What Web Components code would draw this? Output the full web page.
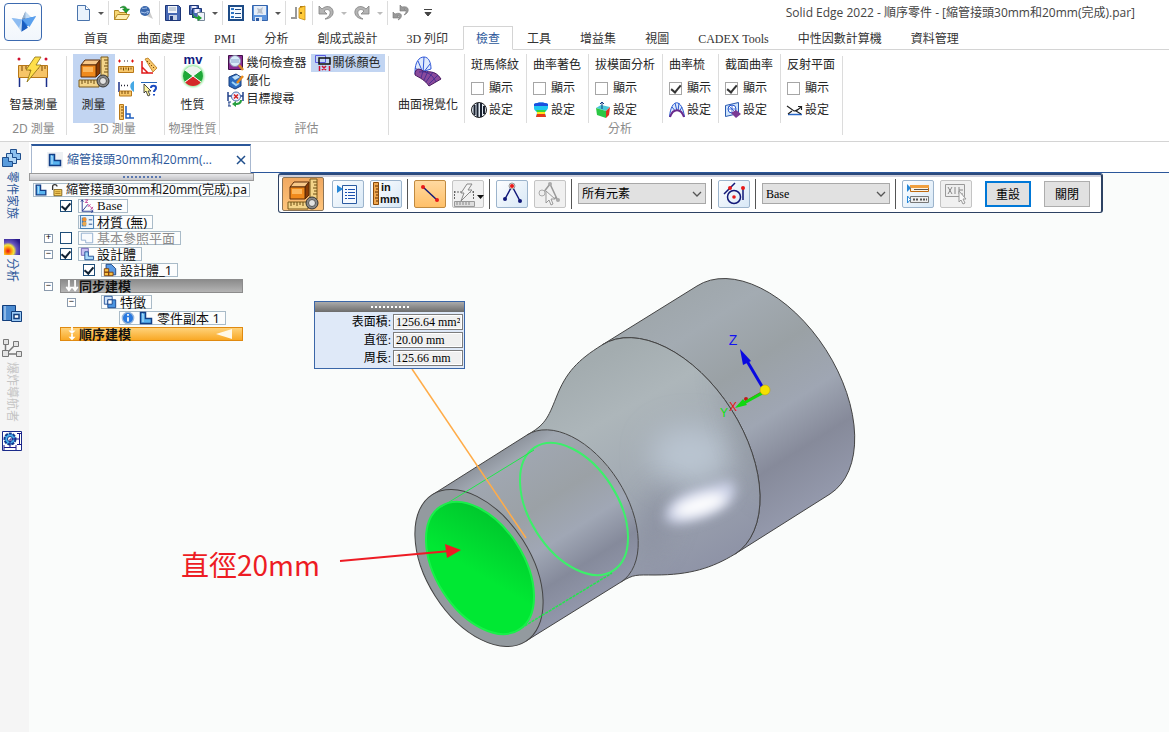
<!DOCTYPE html>
<html lang="zh-Hant">
<head>
<meta charset="utf-8">
<title>Solid Edge 2022 - 順序零件</title>
<style>
  html, body { margin: 0; height: 100%; }
  body {
    font: 12px/18px "Liberation Serif", "Noto Sans CJK TC", serif;
    color: #262626;
    background: #fff;
  }
</style>
</head>
<body>
<cad-app></cad-app>

<script>
const SANS = '"Noto Sans", "Noto Sans CJK TC", sans-serif';

/* html is a string, or a function of the element for markup that depends on its attributes */
function define(name, css, html, setup) {
  customElements.define(name, class extends HTMLElement {
    connectedCallback() {
      if (this.shadowRoot) return;
      const body = typeof html === 'function' ? html(this) : html;
      this.attachShadow({ mode: 'open' }).innerHTML = `<style>*{box-sizing:border-box}${css}</style>${body}`;
      if (setup) setup(this, this.shadowRoot);
    }
  });
}

/* ---------- icons: [viewBox size, markup] ---------- */
const cube = `<path d="M3 9l4-5h15l-4 5z" fill="#f8c98a" stroke="#5a2a08"/><path d="M18 9l4-5v13l-4 4z" fill="#8a3c06" stroke="#5a2a08"/><path d="M3 9h15v12H3z" fill="#f08a1c" stroke="#5a2a08"/><path d="M5 11h10v5H5z" fill="#fcb75c"/>
  <path d="M23 1h7v20h-7z" fill="#f3d489" stroke="#7a5a1a"/><path d="M26 4h4M27 7h3M26 10h4M27 13h3M26 16h4" stroke="#6b4a10"/>
  <path d="M1 24h20v7H1z" fill="#f3d489" stroke="#7a5a1a"/><path d="M4 24v4M7 24v3M10 24v4M13 24v3M16 24v4" stroke="#6b4a10"/>
  <circle cx="25" cy="25" r="6" fill="#888" stroke="#333"/><circle cx="25" cy="25" r="3.5" fill="#e2e2e2" stroke="#555"/>`;
const ruler = (y) => `<path d="M0.5 ${y}h15v6H.5z" fill="#f6c66a" stroke="#b87818"/><path d="M3 ${y + 1}v2M5.500 ${y + 1}v3M8 ${y + 1}v2M10.500 ${y + 1}v3M13 ${y + 1}v2" stroke="#7a4a08"/>`;
const part = `<path d="M2.500 2.500h5v6h6v5h-11z" fill="#58b4f0" stroke="#123e86" stroke-width="1.500"/><path d="M4 4h1v8" stroke="#c4e6fc" fill="none"/>`;
const ICONS = {
  logo: [32, `<path d="M19 3l-4 9 4 11z" fill="#5b6f8c"/><path d="M19 3l-4 9 12-1z" fill="#a9cdf0" opacity=".7"/><path d="M2 11l13 2-1 15z" fill="#bdd9f6"/><path d="M15 13l17-4-15 17z" fill="#2f7fe0"/><path d="M15 13l-1 15 8-5z" fill="#1a5dc0"/><path d="M2 11l9 12 4-10z" fill="#8dbcf2"/><path d="M15 13l17-4-8 13z" fill="#5aa0ee"/>`],
  page: [16, `<path d="M2.500.5h8l4 4v11h-12z" fill="#eaf3fd" stroke="#4a74ac"/><path d="M10.500.5v4h4" fill="#fff" stroke="#4a74ac"/>`],
  open: [16, `<path d="M.5 14.500v-9h4l1 2h7v7z" fill="#f7d774" stroke="#b48a28"/><path d="M.5 14.500l3-5h12l-3 5z" fill="#ffeeb0" stroke="#b48a28"/><path d="M6 3c3-3 6-2 7 1h2.500L12 8 8.500 4H11C10 2.500 8 2 6 3z" fill="#20a030" stroke="#0a6a18" stroke-width=".5"/>`],
  globe: [16, `<path d="M7 10l8 4-3-7z" fill="#ccc"/><circle cx="7" cy="6" r="5" fill="#3a67ac"/><path d="M4 3c2 1 3 0 5 0M3 7l4 1 3-2M9 9l2-3" stroke="#a8c4ec" fill="none"/>`],
  save: [16, `<path d="M.5.5h13l2 2v13H.5z" fill="#4668b4" stroke="#1c3576"/><path d="M3 1h9v7H3z" fill="#f2f5fb"/><path d="M4 10h8v5H4z" fill="#c8d2e8"/><path d="M5 11h3v4H5z" fill="#233e80"/><path d="M4 3h7M4 5h7" stroke="#9ab"/>`],
  saveall: [16, `<path d="M.5.5h9v9h-9z" fill="#4668b4" stroke="#1c3576"/><path d="M2.500 1h5v4h-5z" fill="#eef"/><path d="M3.500 3.500h9v9h-9z" fill="#4668b4" stroke="#1c3576"/><path d="M5.500 4h5v4h-5z" fill="#eef"/><path d="M8.500 7.500h7v8h-7z" fill="#eef3fb" stroke="#789"/><path d="M4 7c0 4 2 5 5 5v-2l4 3-4 3v-2c-4 0-6-3-5-7z" fill="#20a030"/>`],
  list: [16, `<path d="M1 1h14v14H1z" fill="#f4f9ff" stroke="#1d4b86" stroke-width="2"/><path d="M3 3h3v2H3zM3 7h3v2H3zM3 11h3v2H3z" fill="#2d74c4"/><path d="M7 4.500h6M7 8.500h6M7 12.500h6" stroke="#1d4b86"/>`],
  picdisk: [16, `<path d="M.5.5h15v15H.5z" fill="#5c93dc" stroke="#3464ac"/><path d="M2 1h12v9H2z" fill="#e6eef8"/><path d="M5 3l3 1 3-2-1 4 1 3-4-1-2 1 1-3z" fill="#b8c0cc"/><path d="M3 12h7v4H3z" fill="#dfe9f6"/><path d="M4 13h3v3H4z" fill="#2c57a0"/>`],
  door: [16, `<path d="M9 1h5v12H9z" fill="#a87818"/><path d="M8 3l6-2v14l-6-2z" fill="#ffca3a" stroke="#c48a10" stroke-width=".8"/><path d="M6 3H5v10H0" stroke="#999" stroke-width="2" fill="none"/><circle cx="10" cy="8" r="1" fill="#664400"/>`],
  undo: [16, `<path d="M1 1v8h8L6 6c3-3 7-1 6 3-.5 2-3 4-5 5 5 0 9-4 8-8C14 1 8 0 4 4z" fill="#b4b4b4" stroke="#808080" stroke-width=".8"/>`],
  redo: [16, `<path d="M15 1v8H7l3-3C7 3 3 5 4 9c.5 2 3 4 5 5-5 0-9-4-8-8C2 1 8 0 12 4z" fill="#b4b4b4" stroke="#808080" stroke-width=".8"/>`],
  update: [16, `<path d="M7 0v6h6l-2-2c3 0 3 3 0 6 6-2 6-10-2-8zM0 7v6h6l-2-2c3 0 3 2 1 4 5-2 5-9-3-6z" fill="#999" stroke="#777" stroke-width=".6"/>`],
  arrow: [8, `<path d="M1 3h6L4 6z" fill="#555"/>`],
  arrowdim: [8, `<path d="M1 3h6L4 6z" fill="#bbb"/>`],
  more: [8, `<path d="M0 .5h8M1 3.500h6L4 7z" fill="#444" stroke="#444"/>`],
  smart: [32, `<path d="M2.500 31V21M29.500 31V21" stroke="#1a2f8a" stroke-width="1.500"/><circle cx="2" cy="3" r="1.500" fill="#d01030"/><circle cx="29" cy="3" r="1.500" fill="#d01030"/><path d="M1.500 9.500h29v12h-29z" fill="#f6c468" stroke="#b87818"/><path d="M5 10v5M9 10v3M13 10v5M21 10v3M25 10v5M28 10v3" stroke="#7a4a08"/><path d="M18 1h6l-5 8h5L10 26l4-12H9z" fill="#ffdf4a" stroke="#8a7010" stroke-width=".8"/>`],
  measure: [32, cube],
  dist: [16, `<path d="M0 3h3M1.500 1.500v3M13 3h3M14.500 1.500v3" stroke="#e01010"/><path d="M6 3h1M9 3h1" stroke="#223"/>${ruler(8.5)}`],
  angle: [16, `<path d="M1 3v12h11M1 9l6 6" stroke="#e01a1a" stroke-width="1.500" fill="none"/><path d="M4 1l3-1 9 10-4 4z" fill="#f6c66a" stroke="#b87818" stroke-width=".8"/><path d="M7 3l-1 1M9 5L8 6M11 7l-1 1M13 9l-1 1" stroke="#7a4a08"/>`],
  mindist: [16, `<path d="M1 1v10" stroke="#1a2f8a" stroke-width="1.500"/><path d="M3 4.500h1M6 4.500h1M9 4.500h1" stroke="#223" stroke-width="1.500"/><path d="M16 0c-5 2-5 8 0 11z" fill="#46a8e4"/><path d="M1.500 10h12v5h-12z" fill="#f6c66a" stroke="#b87818"/><path d="M4 10v3M7 10v3M10 10v3" stroke="#7a4a08"/>`],
  inquire: [16, `<path d="M0 1.500h16" stroke="#2464b8"/><path d="M3 3v9l2-2 2 5 2-1-2-4h3z" fill="#fff6a0" stroke="#222" stroke-width=".8"/><path d="M10 7c0-3 5-3 5 0 0 2-2 2-2 4M13 13v1.500" stroke="#1a4ac0" stroke-width="2" fill="none"/>`],
  lruler: [16, `<path d="M1.500.5h4v15h-4z" fill="#f6c66a" stroke="#b87818"/><path d="M3 3h2M3 6h2M3 9h2M3 12h2" stroke="#7a4a08"/><path d="M8 2v12h8M8 10h4v4" stroke="#2060c0" stroke-width="1.500" fill="none"/>`],
  physical: [32, `<defs><radialGradient id="g"><stop offset=".7" stop-color="#5de06a"/><stop offset="1" stop-color="#c8f8cc" stop-opacity="0"/></radialGradient></defs><circle cx="16" cy="20" r="13" fill="url(#g)"/><circle cx="16" cy="20" r="10" fill="#eef4ee"/><path d="M16 20L8 14a10 10 0 0 0 0 12zM16 20l8-6a10 10 0 0 1 0 12z" fill="#1ea838"/><path d="M16 20l-8 6a10 10 0 0 0 16 0z" fill="#d42828"/><path d="M8 14l16 12M24 14L8 26" stroke="#fff"/><text x="16" y="8" text-anchor="middle" font-family="Liberation Sans" font-weight="bold" font-size="13" fill="#101a80">mv</text>`],
  inspect: [16, `<path d="M.5.5h14v14H.5z" fill="#8a2a94" stroke="#401048"/><circle cx="7" cy="6" r="5.500" fill="#d8ecfa" stroke="#88a"/><path d="M3 5h8M3 7h8" stroke="#8aa4cc"/><path d="M11 10l4 5" stroke="#d8882a" stroke-width="2.500"/>`],
  optimize: [16, `<path d="M1 4l7-3 5 3v9l-6 3-6-3z" fill="#2c6cc0" stroke="#163c7c"/><path d="M4 4l5-2 3 2-5 3z" fill="#bfe0fa"/><path d="M4 9l4 3 3-2" stroke="#9fd4f8" stroke-width="2" fill="none"/><path d="M9 10l6-7" stroke="#e88a1c" stroke-width="2.500"/>`],
  goal: [16, `<path d="M0 1v9M15 1v9M0 5h15" stroke="#22428a" stroke-width="1.500"/><circle cx="8" cy="5.500" r="4.500" fill="#eef" stroke="#456aa8"/><path d="M6 3.500l4 4M10 3.500l-4 4" stroke="#d02020" stroke-width="1.500"/><path d="M1 11v4M0 11h3M0 15h3" stroke="#22428a"/><path d="M14 9c0 4-3 5-6 5v2l-4-3 4-3v2c2 0 4-1 4-3z" fill="#28a040"/>`],
  relcolor: [16, `<path d="M.5.500h10v7h-10z" fill="none" stroke="#5a5ae0"/><path d="M4 3h11v6H4z" fill="none" stroke="#111" stroke-width="1.500"/><path d="M7 11l4 4M11 11l-4 4M4.500 11v5M14.500 11v5" stroke="#d01030" stroke-width="1.500"/>`],
  visual: [32, `<path d="M3 16C3 6 7 1 12 1s7 6 7 12L3 18z" fill="#dfeafc" stroke="#3058d8"/><path d="M12 1l-1 16M6 5l5 12M3 12l8 5M18 8l-7 9" stroke="#3058d8"/><path d="M3 19c0-7 4-7 8-4 4 2 12-2 18 8L17 30C13 24 8 22 3 19z" fill="#8a4a9c" stroke="#4a1a60"/><path d="M11 15l-2 7M16 15l-4 9M21 16l-7 10M26 19l-9 9M7 16c8-1 13 2 17 10" stroke="#3a2a90" stroke-width=".8" fill="none"/>`],
  zebra: [16, `<circle cx="8" cy="8" r="7.500" fill="#e4ecf4" stroke="#222"/><path d="M3.500 3v10M6.500 1v14M10 1v14M13 4v8" stroke="#1a2230" stroke-width="2"/>`],
  shade: [16, `<path d="M1 2c4-2 10-2 14 0v4c-1 3-3 3-3 5l1 4H3l1-4C4 9 1 9 1 6z" fill="#20c8f0"/><path d="M1 2c4-2 10-2 14 0v2H1z" fill="#1a50e0"/><path d="M3 8h10l-1 2H4z" fill="#30d840"/><path d="M4 10h8v2H4z" fill="#ffe020"/><path d="M4 12h8l1 3H3z" fill="#e83818"/>`],
  draft: [16, `<path d="M1 6l5-3 9 2-4 4z" fill="#4ac8d8"/><path d="M1 6l10 3v7l-9-3z" fill="#2cc844"/><path d="M11 9l4-4-1 8-3 3z" fill="#e03020"/><path d="M7 7V0M5 2l2-2 2 2" stroke="#123a80" fill="none"/>`],
  comb: [16, `<path d="M.5 15C2-4 13-4 15.500 15" fill="#dce8fc" stroke="#2a5ad0"/><path d="M3 5l4 5M6 1l2 8M10 1L9 9M13 5l-3 5" stroke="#2a5ad0"/><path d="M1 15c3-9 11-9 14 0z" fill="#fff"/><path d="M1 15c3-9 11-9 14 0" fill="none" stroke="#6a2a8c" stroke-width="2"/>`],
  section: [16, `<path d="M.5 3.500l13-3v11l-13 3z" fill="#cfe4fa" stroke="#2a5ab0"/><circle cx="7" cy="7" r="4" fill="#fff" stroke="#2a5ad0"/><path d="M7 3v8M3 7h8M4 4l6 6" stroke="#2a5ad0" stroke-width=".8"/><path d="M6 11l5-3 5 4-5 4z" fill="#7a3a94"/>`],
  reflect: [16, `<path d="M1 12.500h14" stroke="#2868c8" stroke-width="1.500"/><path d="M0 4l7 5c3 0 5-2 7-4M11 4.500h3.500V8M5 9l-4 3M9 9l5 3" fill="none" stroke="#222" stroke-width="1.200"/>`],
  doc: [16, `<path d="M0 0h16v16H0z" fill="#eef1f4"/>${part}`],
  part: [16, part],
  lock: [16, `<path d="M3 8V4c0-3 5-3 5 0" fill="none" stroke="#333" stroke-width="1.500"/><path d="M4.500 7.500h9v7h-9z" fill="#f6d060" stroke="#7a5a10"/><path d="M6 10h6M6 12h6" stroke="#a87818"/>`],
  csys: [16, `<path d="M2.500 1v13H15M2.500 14L9 6" stroke="#1a2f8a" fill="none"/><path d="M1 3l1.500-2L4 3M13 12.500l2 1.500-2 1.500" stroke="#1a2f8a" fill="none"/><path d="M6 1h3L6 4h3M9 6l3 3M12 6L9 9M12 9l3 3M15 9l-3 3" stroke="#c03890" fill="none"/>`],
  material: [16, `<path d="M.5.500h15v15H.5z" fill="#eaf4fc" stroke="#2a6aa8"/><path d="M2 3h5v10H2z" fill="#2a7ac8"/><circle cx="5" cy="5" r="2.500" fill="#f09030"/><circle cx="5" cy="10" r="2.500" fill="#e8a850"/><path d="M10 5.500h4M10 10.500h4" stroke="#1a3f7a"/>`],
  plane: [16, `<path d="M1.500 2.500h13v11h-8v-3h-5z" fill="#f8fafd" stroke="#8aa8cc"/>`],
  body: [16, `<path d="M1.500 1.500h8v8h-8z" fill="#c8c0f0" stroke="#6a5ab0"/><path d="M5.500 5.500h4v5h6v4h-10z" fill="#a8d8f8" stroke="#1a4a94"/>`],
  bodyc: [16, `<path d="M3.500 1.500h6l5 5v7h-7l-4-4z" fill="#5a9ae4" stroke="#1a3f7a"/><path d="M1.500 6.500h5v4h-5zM1.500 10.500h5v4h-5zM6.500 10.500h5v4h-5z" fill="#f8c040" stroke="#7a3a08"/>`],
  feat: [16, `<path d="M1.500 1.500h9v9h-9z" fill="#cfe2f8" stroke="#1a4a94"/><path d="M5.500 5.500h9v9h-9z" fill="#4a94e0" stroke="#123e86"/><path d="M5.500 5.500h5v5h-5z" fill="#fff" stroke="#123e86"/>`],
  info: [16, `<circle cx="8" cy="8" r="6.500" fill="#2a7ae0" stroke="#9ab8dc" stroke-width="1.500"/><path d="M8 7v5M8 3.500v2" stroke="#fff" stroke-width="2"/>`],
  sync: [16, `<path d="M4.500 1v12M11.500 1v12M1.500 9l3 4 3-4M8.500 9l3 4 3-4" stroke="#fff" stroke-width="2" fill="none"/>`],
  ordered: [16, `<path d="M8 0v4M8 8v4" stroke="#fff" stroke-width="2"/><path d="M4 4h8L8 8zM4 11h8l-4 4z" fill="#fff"/>`],
  family: [20, `<path d="M8.500 1.500h6v4h4v6h-8v-4h-2z" fill="#8cc0ee" stroke="#1f4e8c"/><path d="M4.500 5.500h6v4h4v6h-8v-4h-2z" fill="#b4d8f6" stroke="#1f4e8c"/><path d="M.5 9.500h6v4h4v5H.500z" fill="#5a9cdc" stroke="#1f4e8c"/>`],
  fea: [16, `<defs><radialGradient id="h" cx=".25" cy=".75" r=".9"><stop offset="0" stop-color="#e81010"/><stop offset=".25" stop-color="#ff9a10"/><stop offset=".42" stop-color="#f0e840"/><stop offset=".6" stop-color="#6a58c0"/><stop offset="1" stop-color="#2a1a8c"/></radialGradient></defs><path d="M0 0h16v16H0z" fill="url(#h)"/>`],
  library: [20, `<path d="M.5 1.500h13v15H.5z" fill="#4a8ad0" stroke="#123e7c"/><path d="M3 2v14" stroke="#cfe4fa"/><path d="M9.500 7.500h10v10h-10z" fill="#9ccaf4" stroke="#123e7c"/><path d="M12 10.500h5v4h-5z" fill="#fff" stroke="#123e7c" stroke-width="1.500"/>`],
  explode: [20, `<path d="M3.500 4v11h12M5 14l8-8" stroke="#777" fill="none" stroke-width="1.500"/><path d="M1.500.5h5v5h-5zM.5 11.500h6v6h-6zM11.500 2.500h5v5h-5zM14.500 12.500h5v5h-5z" fill="#e4e4e4" stroke="#777"/>`],
  gear: [20, `<path d="M.5.500h19v19H.5z" fill="#fff" stroke="#1a2a8a"/><circle cx="8" cy="8" r="5.500" fill="#4ab0ec" stroke="#123a90" stroke-width="2" stroke-dasharray="3 1"/><circle cx="8" cy="8" r="2.500" fill="#fff" stroke="#123a90"/><path d="M2 16.500h12M2 14v5M14 14v5M17.500 2v12M15 2.500h5M15 13.500h5M8 8v9M8 8h10" stroke="#1a1a8a"/>`],
  options: [24, `<path d="M6.500 3.500h14v18h-14z" fill="#f6faff" stroke="#2a5aa0"/><path d="M9 7.500h2M12 7.500h7M9 10.500h2M12 10.500h7M9 13.500h2M12 13.500h7M9 16.500h2M12 16.500h7" stroke="#1a50b0"/><path d="M1 3l6 4-6 4z" fill="#2888d8"/>`],
  units: [24, `<path d="M-.5.500h5v22h-5z" fill="#f0a850" stroke="#8a4a08"/><path d="M1 4h3M2 7h2M1 10h3M2 13h2M1 16h3M2 19h2" stroke="#5a2a00"/><g font-family="Liberation Sans" font-weight="bold" font-size="11" fill="#111"><text x="7" y="9">in</text><text x="6" y="21">mm</text></g>`],
  line: [24, `<path d="M5 5l14 13" stroke="#111878" stroke-width="1.500"/><circle cx="5" cy="5" r="2" fill="#e81818"/><circle cx="19" cy="18" r="2" fill="#e81818"/>`],
  smartdim: [32, `<path d="M1.500 10v9M1 11h20M20.500 10v9" stroke="#666" stroke-dasharray="2 1"/><path d="M14 3h5l-4 6h4L8 20l3-8H8z" fill="#f4f4f4" stroke="#888"/><path d="M1.500 20.500h20v5h-20z" fill="#ddd" stroke="#999"/><path d="M4 21v3M7 21v3M10 21v3M13 21v3M16 21v3" stroke="#888"/><path d="M24 14h7l-3.500 4z" fill="#111"/>`],
  vertex: [24, `<path d="M5 17l7-13 8 15" stroke="#111878" stroke-width="1.500" fill="none"/><circle cx="12" cy="4" r="3" fill="#f4d8dc" stroke="#999"/><circle cx="12" cy="4" r="2" fill="#e81818"/><circle cx="5" cy="17" r="2" fill="#111878"/><circle cx="20" cy="19" r="2" fill="#111878"/>`],
  vertexdim: [24, `<path d="M5 11l7-9 8 17-3-4" stroke="#999" stroke-width="1.500" fill="none"/><circle cx="4" cy="11" r="3" fill="#eee" stroke="#aaa"/><circle cx="12" cy="2" r="2" fill="#aaa"/><circle cx="20" cy="18" r="2" fill="#aaa"/><path d="M8 9v12l3-3 2 5 2-1-2-5h4z" fill="#f4f4f4" stroke="#999"/>`],
  tangent: [24, `<circle cx="12" cy="15" r="6.500" fill="none" stroke="#111878" stroke-width="1.500"/><path d="M2 12L13 1M21 6v12" stroke="#111878" stroke-width="1.500"/><circle cx="12" cy="15" r="1.800" fill="#e81818"/><circle cx="8" cy="6" r="2" fill="#e81818"/><circle cx="21" cy="6" r="2" fill="#e81818"/>`],
  rows: [24, `<path d="M4.500 3.500h18v6h-18z" fill="#fdf4e4" stroke="#c06a10"/><path d="M4 3h19v3H4z" fill="#f0a040"/><path d="M8 7.500h14" stroke="#555"/><path d="M1 2l4 4-4 4z" fill="#2888d8"/><path d="M4.500 14.500h18v6h-18z" fill="#eee" stroke="#777"/><path d="M7 17.500h5M14 17.500h7" stroke="#555" stroke-dasharray="2 1" stroke-width="2"/><path d="M1.500 14l3 3.500-3 3.500z" fill="#fff" stroke="#2888d8"/>`],
  grid: [24, `<path d="M1.500 2.500h19v12h-19z" fill="#eee" stroke="#999"/><path d="M4 5l4 7M8 5l-4 7M11 5v7M15 5v7h4M15 8h4" stroke="#888"/><path d="M15 9v11l2-2 2 4 2-1-2-4h3z" fill="#f8f8f8" stroke="#999"/>`],
  chevron: [12, `<path d="M2 4l4 4 4-4" fill="none" stroke="#555" stroke-width="1.300"/>`],
  close: [12, `<path d="M2 2l8 8M10 2l-8 8" stroke="#1f4e8c" stroke-width="1.500"/>`]
};

define('cad-icon', `:host{display:inline-flex;flex:none}svg{display:block;overflow:visible}`, (el) => {
  const [box, body] = ICONS[el.getAttribute('name')];
  const size = el.getAttribute('size') || box;
  return `<svg width="${size}" height="${size}" viewBox="0 0 ${box} ${box}" fill="none" aria-hidden="true">${body}</svg>`;
});

/* ---------- title row ---------- */
define('quick-bar', `
  :host{display:flex;align-items:center;height:26px;padding-left:29px}
  button{all:unset;box-sizing:border-box;display:flex;align-items:center;justify-content:center;width:24px;height:20px}
  .drop{width:12px}
  i{width:1px;height:24px;margin:0 1px;background:#dcdcdc}
  .gap{width:30px}
  h1{flex:1;margin:0;padding-right:34px;text-align:right;font:12px/20px "Open Sans","Noto Sans CJK TC",sans-serif;color:#444;white-space:nowrap}`, `
  <button aria-label="新建"><cad-icon name="page"></cad-icon></button><button class="drop" aria-label="新建選項"><cad-icon name="arrow"></cad-icon></button><i></i>
  <button aria-label="開啟"><cad-icon name="open"></cad-icon></button><button aria-label="瀏覽"><cad-icon name="globe"></cad-icon></button><i></i>
  <button aria-label="儲存"><cad-icon name="save"></cad-icon></button><button aria-label="另存"><cad-icon name="saveall"></cad-icon></button><button class="drop" aria-label="另存選項"><cad-icon name="arrow"></cad-icon></button><i></i>
  <button aria-label="內容"><cad-icon name="list"></cad-icon></button><button aria-label="影像"><cad-icon name="picdisk"></cad-icon></button><button class="drop" aria-label="影像選項"><cad-icon name="arrow"></cad-icon></button><i></i>
  <button aria-label="結束"><cad-icon name="door"></cad-icon></button><i></i>
  <button aria-label="復原"><cad-icon name="undo"></cad-icon></button><button class="drop" aria-label="復原清單"><cad-icon name="arrowdim"></cad-icon></button><button aria-label="重做"><cad-icon name="redo"></cad-icon></button><button class="drop" aria-label="重做清單"><cad-icon name="arrowdim"></cad-icon></button><i></i>
  <button aria-label="更新"><cad-icon name="update"></cad-icon></button><button class="gap" aria-label="自訂"><cad-icon name="more"></cad-icon></button>
  <h1>Solid Edge 2022 - 順序零件 - [縮管接頭30mm和20mm(完成).par]</h1>`);

define('ribbon-tab', `
  :host{display:block}
  button{all:unset;box-sizing:border-box;height:24px;padding:0 14px;border:1px solid transparent;border-width:1px 1px 0 0;line-height:24px;color:#333;white-space:nowrap}
  :host([active]) button{border:1px solid #d4d4d4;border-bottom-color:#fff;color:#2b579a;padding:0 12px}
  `, `<button role="tab"><slot></slot></button>`);

define('app-header', `
  :host{display:flex;border-bottom:1px solid #d4d4d4;height:50px}
  .app{all:unset;box-sizing:border-box;display:flex;align-items:center;justify-content:center;width:38px;height:38px;margin:3px 0 0 4px;border:1px solid #3c6ab0;border-radius:4px;background:linear-gradient(#fff,#f1f6fc)}
  .right{flex:1;min-width:0}
  nav{display:flex;height:24px;padding-left:28px}`, `
  <button class="app" aria-label="應用程式"><cad-icon name="logo" size="26"></cad-icon></button>
  <div class="right"><quick-bar></quick-bar>
  <nav role="tablist"><ribbon-tab>首頁</ribbon-tab><ribbon-tab>曲面處理</ribbon-tab><ribbon-tab>PMI</ribbon-tab><ribbon-tab>分析</ribbon-tab><ribbon-tab>創成式設計</ribbon-tab><ribbon-tab>3D 列印</ribbon-tab><ribbon-tab active>檢查</ribbon-tab><ribbon-tab>工具</ribbon-tab><ribbon-tab>增益集</ribbon-tab><ribbon-tab>視圖</ribbon-tab><ribbon-tab>CADEX Tools</ribbon-tab><ribbon-tab>中性因數計算機</ribbon-tab><ribbon-tab>資料管理</ribbon-tab></nav></div>`);

/* ---------- ribbon ---------- */
define('ribbon-group', `
  :host{position:relative;display:flex;flex-direction:column;padding:4px 3px 0}
  :host::after{content:"";position:absolute;right:0;top:6px;bottom:6px;width:1px;background:#dcdcdc}
  .body{display:flex;height:69px;gap:3px;justify-content:center}
  .label{text-align:center;font:12px/12px ${SANS};color:#8a8a8a}`,
  (el) => `<div class="body"><slot></slot></div><div class="label">${el.getAttribute('label')}</div>`);

define('big-button', `
  :host{display:block}
  button{all:unset;box-sizing:border-box;display:flex;flex-direction:column;align-items:center;gap:8px;min-width:42px;height:69px;padding-top:2px;white-space:nowrap;text-align:center}
  :host([on]) button{background:#c2d5f2}`,
  (el) => `<button><cad-icon name="${el.getAttribute('icon')}"></cad-icon><span><slot></slot></span></button>`);

define('small-button', `
  :host{display:block}
  button{all:unset;box-sizing:border-box;display:flex;align-items:center;gap:2px;height:18px;white-space:nowrap}
  :host([on]) button{background:#c2d5f2;padding:0 4px}`,
  (el) => `<button aria-label="${el.title || el.textContent}"><cad-icon name="${el.getAttribute('icon')}"></cad-icon><span><slot></slot></span></button>`);

define('analysis-box', `
  :host{display:block;height:69px;padding:1px 7px 0 6px;border-left:1px solid #dcdcdc;white-space:nowrap}
  div{height:20px;line-height:20px}
  label{display:flex;align-items:center;gap:5px;height:26px}
  input{appearance:none;display:grid;place-items:center;width:13px;height:13px;margin:0;border:1px solid #a6a6a6;background:#fff}
  input:checked::before{content:"";width:4px;height:8px;margin-bottom:2px;border:solid #333;border-width:0 2px 2px 0;transform:rotate(40deg)}
  `, (el) => `<div>${el.getAttribute('heading')}</div><label><input type="checkbox"${el.hasAttribute('checked') ? ' checked' : ''}>顯示</label><small-button icon="${el.getAttribute('icon')}">設定</small-button>`);

define('ribbon-panel', `
  :host{display:flex;height:92px;border-bottom:1px solid #d4d4d4}
  .tools{display:grid;grid-template-columns:16px 16px;gap:5px 7px;align-content:start;padding-top:3px}
  .stack{display:flex;flex-direction:column}
  .eval{display:flex;gap:4px}
  .boxes{display:flex}
  .g1{width:67px}.g2{width:98px}.g2{padding-right:6px}.g3{width:55px}.g4{width:169px;padding-left:7px}.g5{padding:4px 1px 0 9px}
  .boxes{padding-left:3px}`, `
  <ribbon-group class="g1" label="2D 測量"><big-button icon="smart">智慧測量</big-button></ribbon-group>
  <ribbon-group class="g2" label="3D 測量"><big-button icon="measure" on>測量</big-button>
    <div class="tools"><small-button title="距離" icon="dist"></small-button><small-button title="角度" icon="angle"></small-button><small-button title="最小距離" icon="mindist"></small-button><small-button title="查詢" icon="inquire"></small-button><small-button title="法向距離" icon="lruler"></small-button></div></ribbon-group>
  <ribbon-group class="g3" label="物理性質"><big-button icon="physical">性質</big-button></ribbon-group>
  <ribbon-group class="g4" label="評估"><div class="eval"><div class="stack"><small-button icon="inspect">幾何檢查器</small-button><small-button icon="optimize">優化</small-button><small-button icon="goal">目標搜尋</small-button></div><small-button icon="relcolor" on>關係顏色</small-button></div></ribbon-group>
  <ribbon-group class="g5" label="分析"><big-button icon="visual">曲面視覺化</big-button>
    <div class="boxes"><analysis-box heading="斑馬條紋" icon="zebra"></analysis-box><analysis-box heading="曲率著色" icon="shade"></analysis-box><analysis-box heading="拔模面分析" icon="draft"></analysis-box><analysis-box heading="曲率梳" icon="comb" checked></analysis-box><analysis-box heading="截面曲率" icon="section" checked></analysis-box><analysis-box heading="反射平面" icon="reflect"></analysis-box></div></ribbon-group>`);

/* ---------- left rail ---------- */
define('rail-tab', `
  :host{display:block}
  button{all:unset;display:flex;flex-direction:column;align-items:center;gap:3px;width:24px;color:#2b579a}
  :host([dim]) button{color:#c4c4c4}
  span{writing-mode:vertical-rl;text-orientation:sideways;line-height:20px}`, `
  <button><slot name="icon"></slot><span><slot></slot></span></button>`);

define('side-rail', `
  :host{display:flex;flex-direction:column;width:29px;flex:none;padding-top:6px;background:#f5f5f5}
  .a{margin-bottom:20px}.b{margin-bottom:22px}.c{margin-bottom:12px}.d{margin-bottom:9px}`, `
  <rail-tab class="a"><cad-icon slot="icon" name="family"></cad-icon>零件家族</rail-tab>
  <rail-tab class="b"><cad-icon slot="icon" name="fea"></cad-icon>分析</rail-tab>
  <rail-tab class="c"><cad-icon slot="icon" name="library"></cad-icon></rail-tab>
  <rail-tab class="d" dim><cad-icon slot="icon" name="explode"></cad-icon>爆炸導航者</rail-tab>
  <rail-tab><cad-icon slot="icon" name="gear"></cad-icon></rail-tab>`);

/* ---------- document tab ---------- */
define('doc-tabs', `
  :host{display:flex;height:31px;padding:2px 0 0 2px;background:#fff}
  .tab{display:flex;align-items:center;width:220px;padding:0 3px 0 15px;border:1px solid #a8b8d0;border-top:2px solid #2b579a;border-bottom:0;background:#fff}
  a{flex:1;margin-left:4px;font:12px/18px "Open Sans","Noto Sans CJK TC",sans-serif;color:#2b579a;text-decoration:none;white-space:nowrap}
  button{all:unset;display:flex}
  .rest{flex:1;border-bottom:1px solid #2b579a}`, `
  <div class="tab"><cad-icon name="doc"></cad-icon><a href="#doc">縮管接頭30mm和20mm(...</a><button aria-label="關閉文件"><cad-icon name="close"></cad-icon></button></div><div class="rest"></div>`);

/* ---------- feature tree ---------- */
define('tree-row', `
  :host{display:flex;align-items:center;height:16px;white-space:nowrap;font:13px/14px ${SANS};color:#111}
  .exp{all:unset;box-sizing:border-box;display:grid;place-items:center;flex:none;width:9px;height:9px;margin:0 7px 0 0;border:1px solid #8a9aac;background:#fff;font:9px/7px "Liberation Mono",monospace;color:#000}
  input,.space{flex:none;width:12px;height:12px;margin:0 6px 0 0}
  input{appearance:none;display:grid;place-items:center;border:1px solid #1f4e79;background:#fff}
  input:checked::before{content:"";width:4px;height:7px;margin-bottom:2px;border:solid #123;border-width:0 2px 2px 0;transform:rotate(40deg)}
  .box{display:flex;align-items:center;gap:3px;height:14px;padding:0 2px 0 1px;border:1px solid #a9bbc8;background:#fcfdfd}
  :host([dim]) .box{color:#8c8c8c}
  :host([title-row]) .box{font-size:12px;gap:2px;padding:0}
  :host([serif]) .box{font-family:"Liberation Serif",serif}
  :host([bar]) .box{width:183px;font-weight:bold;padding-left:4px;gap:0}
  :host([bar=gray]) .box{background:linear-gradient(#8c8c8c,#b4b4b4);border-color:#8c8c8c}
  :host([bar=gold]) .box{background:linear-gradient(#ffd27a,#f9a825);border-color:#e08a10}
  .end{display:flex}
  :host([bar]) .end{flex:1;justify-content:flex-end}
  `, (el) => {
    const get = (n) => el.getAttribute(n);
    const exp = get('exp') ? `<button class="exp" aria-label="展開">${get('exp')}</button>` : '';
    const check = { on: `<input type="checkbox" checked aria-label="顯示">`, off: `<input type="checkbox" aria-label="顯示">`, none: `<span class="space"></span>` }[get('check')] || '';
    return `<style>:host{padding-left:${get('indent')}px}</style>${exp}${check}<div class="box"><slot name="icon"></slot><slot></slot><span class="end"><slot name="end"></slot></span></div>`;
  });

define('grip-bar', `
  :host{display:flex;align-items:center;justify-content:center;height:8px;border:1px solid #9a9a9a;background:linear-gradient(#e8e8ea,#c4c4c8)}
  span{width:38px;height:2px;background:repeating-linear-gradient(90deg,var(--dot,#5a78b0) 0 2px,transparent 2px 4px)}`, `<span></span>`);

define('feature-tree', `
  :host{display:block;width:225px;flex:none}
  .rows{padding:1px 0 0 4px}
  .tri{width:0;height:0;border:solid transparent;border-width:5px 16px 5px 0;border-right-color:#fff8e8;margin-right:8px}`, `
  <grip-bar></grip-bar>
  <div class="rows" role="tree">
    <tree-row indent="0" title-row><cad-icon slot="icon" name="part" size="14"></cad-icon><cad-icon slot="icon" name="lock" size="14"></cad-icon>縮管接頭30mm和20mm(完成).pa</tree-row>
    <tree-row indent="27" check="on" serif><cad-icon slot="icon" name="csys" size="14"></cad-icon>Base</tree-row>
    <tree-row indent="45"><cad-icon slot="icon" name="material" size="14"></cad-icon>材質 (無)</tree-row>
    <tree-row indent="11" exp="+" check="off" dim><cad-icon slot="icon" name="plane" size="14"></cad-icon>基本參照平面</tree-row>
    <tree-row indent="11" exp="−" check="on"><cad-icon slot="icon" name="body" size="14"></cad-icon>設計體</tree-row>
    <tree-row indent="50" check="on"><cad-icon slot="icon" name="bodyc" size="14"></cad-icon>設計體_1</tree-row>
    <tree-row indent="11" exp="−" bar="gray"><cad-icon slot="icon" name="sync" size="14"></cad-icon>同步建模</tree-row>
    <tree-row indent="34" exp="−" check="none"><cad-icon slot="icon" name="feat" size="14"></cad-icon>特徵</tree-row>
    <tree-row indent="86"><cad-icon slot="icon" name="info" size="14"></cad-icon><cad-icon slot="icon" name="part"></cad-icon>零件副本 1</tree-row>
    <tree-row indent="27" bar="gold"><cad-icon slot="icon" name="ordered" size="14"></cad-icon>順序建模<span slot="end" class="tri"></span></tree-row>
  </div>`);

/* ---------- floating command bar ---------- */
define('command-button', `
  :host{display:block}
  button{all:unset;box-sizing:border-box;display:grid;place-items:center;width:32px;height:28px;border:1px solid #9cb4cc;border-radius:2px;background:linear-gradient(135deg,#fdfeff,#d8e8f6)}
  :host([on]) button{border-color:#c08a40;background:linear-gradient(#ffd9a0,#ffc069)}
  :host([dim]) button{border-color:#c4c4c4;background:#f0f0f0}
  :host([big]) button{width:42px;height:34px;border-color:#8a7458;background:linear-gradient(#f0a860,#ffc57c)}`,
  (el) => `<button aria-label="${el.getAttribute('label')}"><slot></slot></button>`);

define('command-bar', `
  :host{display:flex;align-items:center;gap:6px;height:40px;padding:0 11px 0 3px;border:1px solid #2d4263;border-top:2px solid #2b4a7c;border-right-width:2px;border-radius:3px;background:#fff;box-shadow:inset 0 2px #cfd0dc}
  i{width:1px;height:30px;margin-left:-1px;background:#555}
  .lead{margin-right:2px}
  .pick{position:relative;display:flex;align-items:center;width:128px}
  select{appearance:none;width:100%;height:21px;padding:0 3px;margin:0;border:1px solid #a8a8a8;border-radius:0;background:#e1e1e1;font:12px/18px "Liberation Serif","Noto Sans CJK TC",serif;color:#000}
  .pick cad-icon{position:absolute;right:3px;pointer-events:none}
  .text{width:46px;height:26px;margin:0 0 0 7px;padding:0;border:1px solid #adadad;background:#e1e1e1;font:12px/18px "Noto Sans CJK TC",sans-serif;color:#000}
  .primary{border:2px solid #0078d7}`, `
  <command-button class="lead" big label="測量"><cad-icon name="measure"></cad-icon></command-button>
  <command-button label="選項"><cad-icon name="options"></cad-icon></command-button>
  <command-button label="單位"><cad-icon name="units"></cad-icon></command-button><i></i>
  <command-button on label="直線"><cad-icon name="line"></cad-icon></command-button>
  <command-button dim label="智慧尺寸"><cad-icon name="smartdim"></cad-icon></command-button><i></i>
  <command-button label="頂點"><cad-icon name="vertex"></cad-icon></command-button>
  <command-button dim label="選取頂點"><cad-icon name="vertexdim"></cad-icon></command-button><i></i>
  <span class="pick"><select aria-label="元素"><option>所有元素</option></select><cad-icon name="chevron"></cad-icon></span><i></i>
  <command-button label="相切"><cad-icon name="tangent"></cad-icon></command-button><i></i>
  <span class="pick"><select aria-label="座標系"><option>Base</option></select><cad-icon name="chevron"></cad-icon></span><i></i>
  <command-button label="結果列"><cad-icon name="rows"></cad-icon></command-button>
  <command-button dim label="變數"><cad-icon name="grid"></cad-icon></command-button>
  <button class="text primary">重設</button><button class="text">關閉</button>`);

/* ---------- measurement card ---------- */
define('measure-card', `
  :host{display:block;width:151px;border:1px solid #3a66a8;background:#dfe9f8}
  grip-bar{height:10px;border:0;background:linear-gradient(#ababab,#6c6c6c);--dot:#fff}
  form{display:grid;grid-template-columns:1fr 70px;gap:2px;padding:2px 1px}
  label{line-height:16px;text-align:right;color:#000}
  input{width:100%;height:16px;margin:0;padding:0 2px;border:1px solid #7d7d7d;outline:1px solid #fff;outline-offset:-2px;background:#f0f0f0;font:12px/14px "Liberation Serif",serif;color:#000}`, `
  <grip-bar></grip-bar>
  <form><label for="s">表面積:</label><input id="s" value="1256.64 mm²" readonly><label for="d">直徑:</label><input id="d" value="20.00 mm" readonly><label for="p">周長:</label><input id="p" value="125.66 mm" readonly></form>`);

/* ---------- 3D view ---------- */
define('model-view', `
  :host{display:block;position:absolute;inset:0;overflow:hidden}
  svg{display:block;width:100%;height:100%}`, `
  <svg viewBox="29 173 1140 559" preserveAspectRatio="xMinYMin meet" role="img" aria-label="縮管接頭">
    <defs>
      <linearGradient id="big" gradientUnits="userSpaceOnUse" x1="650" y1="315" x2="783" y2="525">
        <stop offset="0" stop-color="#9fa7ac"/><stop offset=".15" stop-color="#a3abb2"/><stop offset=".38" stop-color="#9aa1a5"/><stop offset=".6" stop-color="#9fa6b3"/><stop offset=".78" stop-color="#868a9a"/><stop offset="1" stop-color="#9499ac"/>
      </linearGradient>
      <linearGradient id="small" gradientUnits="userSpaceOnUse" x1="480" y1="465" x2="573" y2="612">
        <stop offset="0" stop-color="#8f959e"/><stop offset=".08" stop-color="#a0a7b1"/><stop offset=".38" stop-color="#9ba1a6"/><stop offset=".6" stop-color="#a0a7b5"/><stop offset=".8" stop-color="#858a9b"/><stop offset="1" stop-color="#9297ab"/>
      </linearGradient>
      <linearGradient id="bulge" gradientUnits="userSpaceOnUse" x1="575" y1="370" x2="690" y2="575">
        <stop offset="0" stop-color="#a3acaf"/><stop offset=".25" stop-color="#adb6ba"/><stop offset=".55" stop-color="#a2aab3"/><stop offset="1" stop-color="#8f94a7"/>
      </linearGradient>
      <linearGradient id="bore" gradientUnits="userSpaceOnUse" x1="445" y1="505" x2="480" y2="575">
        <stop offset="0" stop-color="#00bd29"/><stop offset=".35" stop-color="#00cc2e"/><stop offset="1" stop-color="#00e833"/>
      </linearGradient>
      <filter id="soft" x="-200%" y="-200%" width="500%" height="500%"><feGaussianBlur stdDeviation="14"/></filter>
      <filter id="glow" x="-100%" y="-200%" width="300%" height="500%"><feGaussianBlur stdDeviation="6"/></filter>
      <clipPath id="mid"><path d="M527 435C545 425 548 418 556 398C566 372 578 360 602 345A123 74 57.500 0 1 735 554C712 568 690 575 655 575C636 575 634 574 621 582A87 52 57.500 0 0 527 435Z"/></clipPath>
    </defs>
    <path d="M602 345L697 286A123 74 57.500 0 1 830 494L735 554A123 74 57.500 0 0 602 345Z" fill="url(#big)" stroke="#444"/>
    <g clip-path="url(#mid)">
      <path d="M500 320H780V600H500Z" fill="url(#bulge)"/>
      <ellipse cx="690" cy="455" rx="40" ry="30" fill="#b9c4d0" filter="url(#soft)"/>
      <ellipse cx="655" cy="525" rx="14" ry="40" fill="#868b9c" opacity=".7" filter="url(#soft)" transform="rotate(20 655 525)"/>
      <ellipse cx="748" cy="430" rx="10" ry="70" fill="#878e97" opacity=".7" filter="url(#soft)" transform="rotate(-18 748 430)"/>
      <path d="M669 517C672 500 690 496 729 485C736 494 725 504 704 512C690 517 676 522 669 517Z" fill="#ccd2e8" stroke="#ccd2e8" stroke-width="8" filter="url(#glow)"/>
      <ellipse cx="700" cy="505" rx="27" ry="9" fill="#fff" filter="url(#glow)" transform="rotate(-17 700 505)"/>
    </g>
    <path d="M527 435C545 425 548 418 556 398C566 372 578 360 602 345A123 74 57.500 0 1 735 554C712 568 690 575 655 575C636 575 634 574 621 582" fill="none" stroke="#444"/>
    <path d="M432 495L527 435A87 52 57.500 0 1 621 582L526 641Z" fill="url(#small)" stroke="#444"/>
    <ellipse cx="479" cy="568" rx="87" ry="52" transform="rotate(57.500 479 568)" fill="#939a9f" stroke="#444"/>
    <ellipse cx="480" cy="568" rx="73" ry="44" transform="rotate(57.500 480 568)" fill="url(#bore)" stroke="#19f04a" stroke-width="2"/>
    <ellipse cx="574" cy="509" rx="73" ry="44" transform="rotate(57.500 574 509)" fill="none" stroke="#3cf06a" stroke-width="2"/>
    <path d="M441 507L534 450" stroke="#20e84c"/><path d="M518 630L612 573" stroke="#20e84c" stroke-width="1.500" stroke-dasharray="3 1"/>
    <path d="M412 369L526 538" stroke="#ffac48" stroke-width="1.500"/>
    <path d="M340 561L450 551" stroke="#ed1c24" stroke-width="2"/><path d="M461 550L445 544L447 558Z" fill="#ed1c24"/>
    <text x="181" y="576" font-family="Noto Sans CJK TC, sans-serif" font-size="28" fill="#ed1c24">直徑20mm</text>
    <path d="M763 388L747 361" stroke="#0a0ae0" stroke-width="3"/><path d="M740 349L751 361L743 365Z" fill="#0a0ae0"/>
    <path d="M764 391L738 406" stroke="#c01818" stroke-width="2"/><circle cx="746" cy="399" r="2" fill="#c01818"/>
    <path d="M764 392L744 403" stroke="#10d810" stroke-width="3"/><path d="M735 408L743 399L747 405Z" fill="#10d810"/>
    <circle cx="765" cy="390" r="5" fill="#f4e000" stroke="#b8a000" stroke-width=".5"/>
    <g font-family="Liberation Sans, sans-serif" font-size="12" text-anchor="middle"><text x="733" y="345" font-size="14" fill="#1414f0">Z</text><text x="733" y="411" fill="#e81414">X</text><text x="724" y="417" fill="#10e010">Y</text></g>
  </svg>`);

define('work-area', `
  :host{position:relative;display:flex;align-items:flex-start;flex:1;background:#fafcfb}
  command-bar{position:relative;margin-left:24px}
  feature-tree{position:relative}
  measure-card{position:absolute;left:285px;top:128px}`, `
  <model-view></model-view><feature-tree></feature-tree><command-bar></command-bar><measure-card></measure-card>`);

define('cad-app', `
  :host{display:flex;flex-direction:column;min-height:100vh}
  .lower{display:flex;flex:1}
  main{display:flex;flex-direction:column;flex:1;min-width:0}`, `
  <app-header></app-header><ribbon-panel></ribbon-panel>
  <div class="lower"><side-rail></side-rail><main><doc-tabs></doc-tabs><work-area></work-area></main></div>`);
</script>
</body>
</html>
